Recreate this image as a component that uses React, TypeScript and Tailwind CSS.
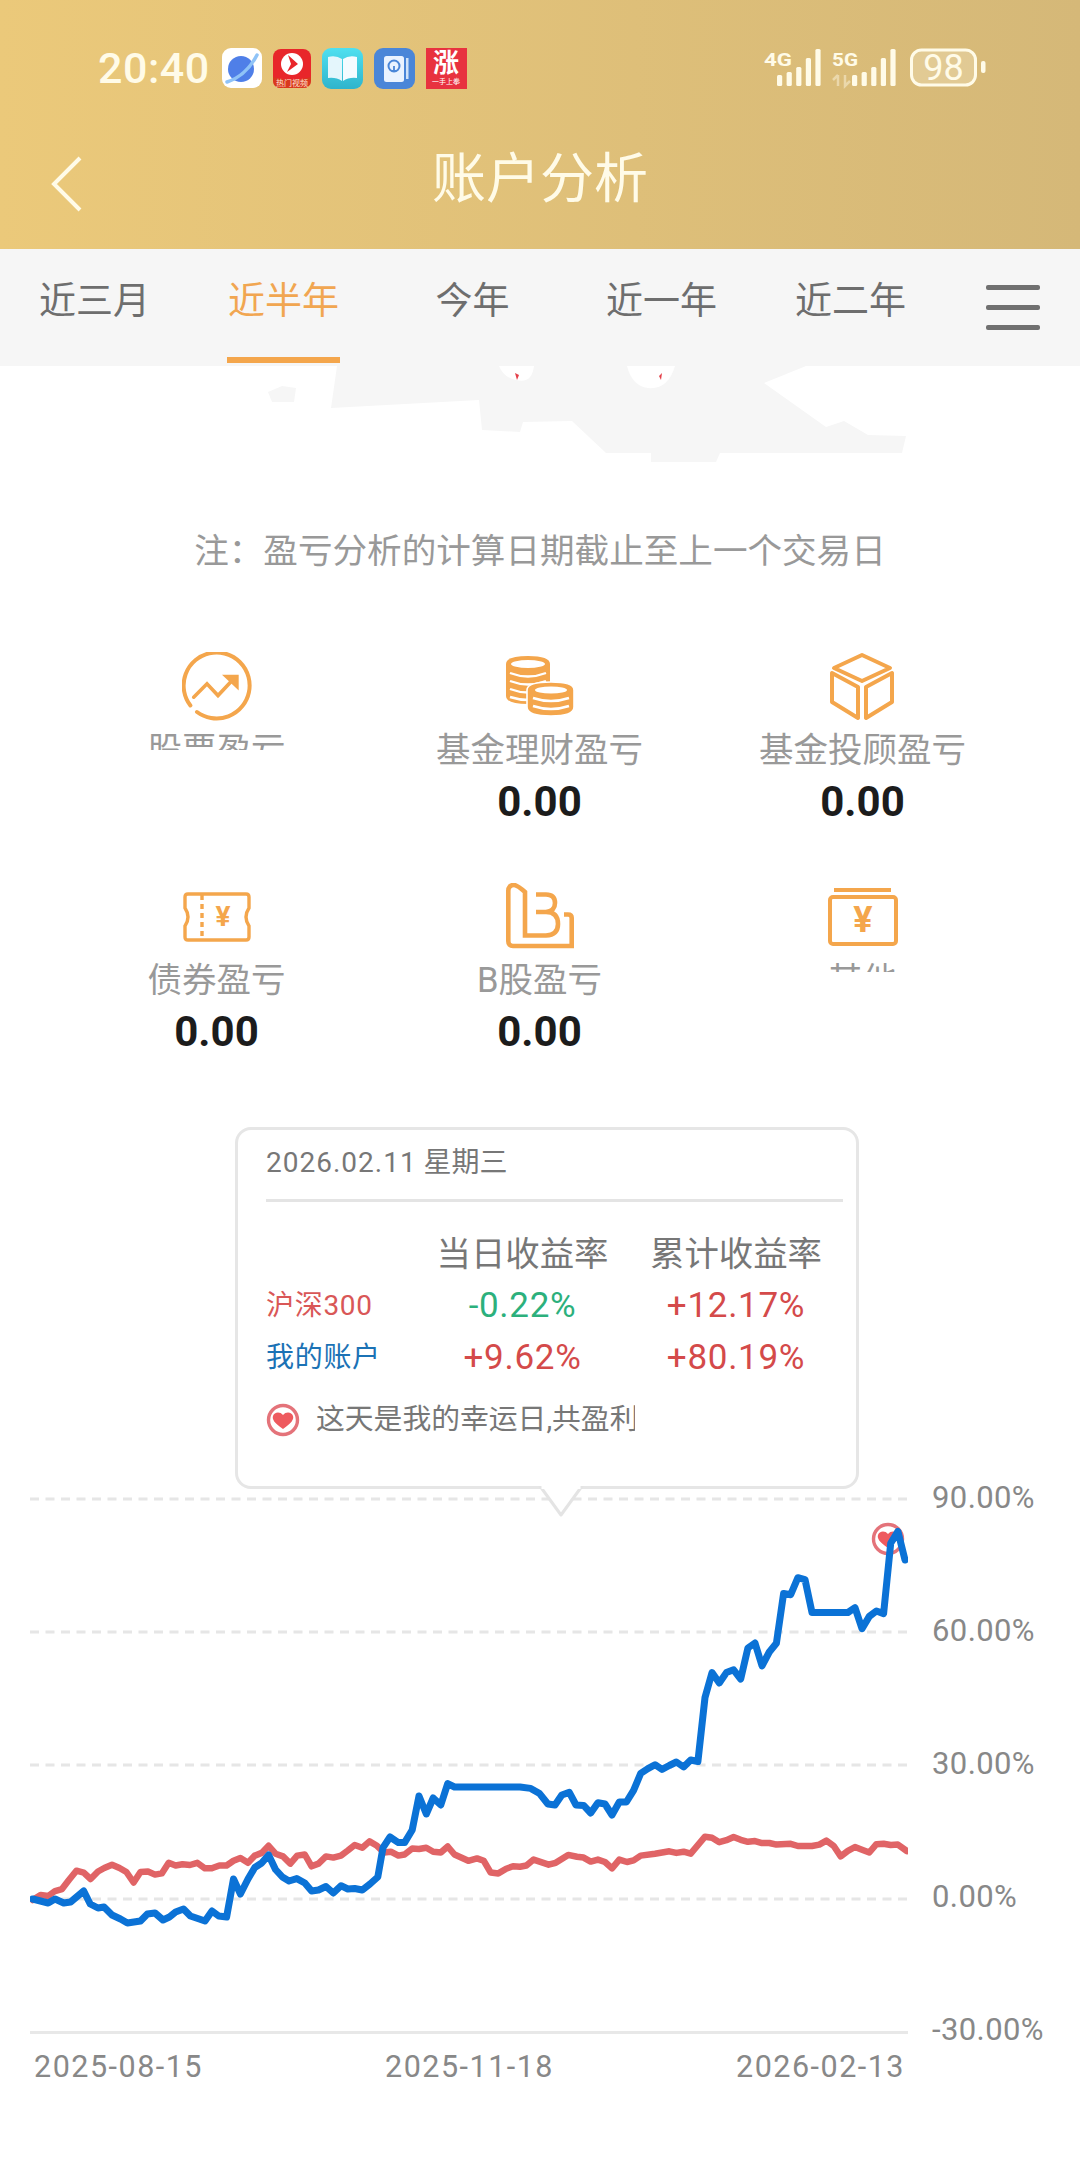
import React from "react";

const ORANGE = "#f4a64c";

const TABS = ["近三月", "近半年", "今年", "近一年", "近二年"];

// chart series, in page px so the grid lines can share the same coordinates
const ACCOUNT_LINE =
  "32.7,1899 48.2,1903 55,1899 63.7,1903 70.6,1902 83.7,1891 90.2,1904 98,1908 104,1907 112,1915 120.5,1919 127.4,1923 140.5,1921 147.4,1914 155,1913 163,1920 169.4,1917 175.6,1912 183.5,1909 190.4,1916 205,1921 212,1911 218.7,1916 226.6,1917 233.5,1879 240.4,1894 248,1879 254.8,1867.5 261.7,1863 268.6,1855 275.5,1869.5 282.4,1877 289,1881 296.8,1878.6 304.8,1883 311.6,1891 318.5,1890 326,1886.5 333.3,1893 341,1885.7 347.8,1889 354.7,1888.5 362.3,1890 370,1884 377.8,1877 383,1847.7 390,1837 398.4,1842.6 404.6,1842.6 412.2,1830 419,1796 426.3,1814 433.2,1798 440.8,1805 447.7,1783.7 454.5,1787 520,1787 530.7,1788.4 539.6,1793.6 547.9,1804 555,1805 561.8,1795 569.3,1792.4 576,1805 583.6,1805.4 590.7,1813 597.9,1802.7 605,1804 612,1815 619.3,1802 626.4,1802 633.6,1790.4 640.7,1773.4 647.9,1768.6 655,1764.7 662,1769.4 669.3,1765.5 676.4,1762 683.6,1767 690.7,1760 697.9,1761.5 705,1697.5 712,1672.6 719.3,1683 726.4,1672.6 733.6,1669.8 740.7,1679 747.9,1648 755,1643 762,1665.8 769.3,1652 776.4,1643.3 783.6,1593.5 790.7,1594.7 797.9,1577.7 805,1579.6 812,1612.5 847.9,1612.5 855,1607.7 862,1628.7 869.3,1616.4 876.4,1611 883.6,1613.6 890.7,1543.3 897.9,1531.4 905,1560";

const INDEX_LINE =
  "32.7,1900 40.6,1895 48.2,1896 55,1891 62,1889 68.9,1880 76.4,1870.7 83.7,1872.6 90.6,1879 98,1871.5 104.3,1868 112,1864.7 119.5,1868 126.4,1872 133.6,1882.5 140.5,1872 148,1871.5 155,1874.6 161.8,1873.4 168.7,1862.8 175.6,1865.5 182.5,1864.3 190,1865 197.3,1862.8 204.9,1868.3 211.8,1868.3 219.4,1865.5 226.6,1865.5 233.5,1860.8 240.4,1858 248,1862.8 254.8,1855.6 261.7,1852.9 268.6,1845.8 275.5,1853.7 283,1856.4 290.3,1863.6 297.2,1855.6 304.8,1854.5 311.6,1866.3 318.5,1863.6 326,1856.4 333.3,1857.6 341,1855.6 347.8,1850.5 354.7,1845 362.3,1847.7 369.5,1841.4 377,1845.8 384,1852.5 390.8,1851.7 398.4,1855.6 404.6,1854.5 412.2,1848.5 419,1849 426.3,1847.7 433.2,1851.7 440.8,1852.5 447.7,1846.5 454.5,1854.5 468.3,1860.8 477,1858.4 483.8,1860.8 490.7,1872.6 498.3,1873.4 506.2,1868.7 513,1866.3 520,1866.7 526.4,1865.5 533.6,1859.6 548.6,1864.7 555.7,1862.8 568.2,1854.9 577,1856.8 583.6,1857.6 590.7,1861.6 597.9,1859.6 605,1862 612,1868.3 619.3,1859.6 627,1862 633.6,1860.4 640.7,1855.6 655,1853.7 669.3,1851.3 676.4,1852.9 683.6,1851.7 690.7,1853.7 705,1836.7 712,1837.8 719.3,1842.2 726.4,1840.2 733.6,1837 740.7,1839.8 747.9,1841.8 755,1841 762,1843 769.3,1843 776.4,1844.6 790.7,1843.8 797.9,1846 812,1846 819.3,1844.6 826.4,1840.6 833.6,1845.8 840.7,1856.4 847.9,1850.9 855,1847 862,1849.7 869.3,1852.5 876.4,1844.2 883.6,1843.8 890.7,1845 897.9,1844.6 906.8,1851";

const GRID_Y = [1499, 1632, 1765, 1899];

function StatusApps() {
  return (
    <div className="ml-[12px] flex items-center gap-[11px]">
      <svg width="40" height="40" viewBox="0 0 40 40">
        <rect width="40" height="40" rx="9" fill="#fff" />
        <circle cx="19" cy="21" r="13" fill="#4f7fe8" />
        <path d="M5 34 Q24 28 35 7" stroke="#8fc3f7" strokeWidth="3.5" fill="none" strokeLinecap="round" />
      </svg>
      <svg width="38" height="39" viewBox="0 0 38 39">
        <rect width="38" height="39" rx="8" fill="#e8262a" />
        <path d="M0 28 Q19 34 38 28 V31 Q38 39 30 39 H8 Q0 39 0 31Z" fill="#d9381e" />
        <circle cx="19" cy="15" r="11" fill="#fff" />
        <path d="M15 6 L25 15 L14 23 L18 15Z" fill="#e8262a" />
        <text x="19" y="36.5" textAnchor="middle" fontSize="8" fill="#ffe3d0">热门视频</text>
      </svg>
      <svg width="41" height="41" viewBox="0 0 41 41">
        <defs>
          <linearGradient id="bookBg" x1="0" y1="0" x2="0" y2="1">
            <stop offset="0" stopColor="#4fe0f0" />
            <stop offset="1" stopColor="#2fb4cc" />
          </linearGradient>
        </defs>
        <rect width="41" height="41" rx="9" fill="url(#bookBg)" />
        <path d="M6 9 Q14 7 20 11 V33 Q14 29 6 30Z" fill="#e4f6fc" />
        <path d="M35 9 Q27 7 21 11 V33 Q27 29 35 30Z" fill="#f4fbff" />
      </svg>
      <svg width="41" height="41" viewBox="0 0 41 41">
        <rect width="41" height="41" rx="9" fill="#4a86d8" />
        <rect x="10" y="8" width="20" height="26" rx="2.5" fill="#eaf3ff" />
        <rect x="32" y="10" width="2.5" height="21" fill="#cfe2f8" />
        <circle cx="20" cy="18" r="5.5" fill="none" stroke="#4a86d8" strokeWidth="2" />
        <path d="M18 23 H22 M20 18 V23" stroke="#4a86d8" strokeWidth="1.8" />
      </svg>
      <div className="flex h-[41px] w-[41px] flex-col items-center bg-[#e8323f] text-white">
        <span className="text-[26px] leading-[30px] font-bold">涨</span>
        <span className="text-[7px] leading-[9px]">一手上拳</span>
      </div>
    </div>
  );
}

function SignalBars({ x }: { x: number }) {
  const tops = [75, 72, 67, 58, 49];
  return (
    <>
      {tops.map((top, i) => (
        <rect key={i} x={x + i * 9.6} y={top - 44} width="5.2" height={86 - top} rx="1.5" fill="#fffbe8" />
      ))}
    </>
  );
}

function StatusRight() {
  return (
    <svg className="ml-auto" width="232" height="48" viewBox="760 0 232 48">
      <text x="764" y="22" fontSize="18" fontWeight="700" fill="#fffbe8" textLength="28" lengthAdjust="spacingAndGlyphs">4G</text>
      <text x="832" y="22" fontSize="18" fontWeight="700" fill="#fffbe8" textLength="26" lengthAdjust="spacingAndGlyphs">5G</text>
      <SignalBars x={777} />
      <SignalBars x={852} />
      <path d="M838 31 V42 M833 36 L838 31 M845 31 V42 L850 37" stroke="#fffbe8" strokeOpacity="0.45" strokeWidth="2.5" fill="none" />
      <rect x="911.5" y="6" width="64" height="35" rx="10" fill="#fffbe8" fillOpacity="0.25" stroke="#fffbe8" strokeWidth="3" />
      <text x="943.5" y="36" textAnchor="middle" fontSize="36" fill="#fffbe8">98</text>
      <rect x="981" y="17" width="4.5" height="12" rx="2" fill="#fffbe8" />
    </svg>
  );
}

function StockIcon() {
  return (
    <svg width="70" height="70" viewBox="0 0 70 70" fill="none" stroke={ORANGE} strokeWidth="4">
      <path d="M15 60 A33 33 0 1 0 8.4 53.5" strokeLinecap="round" />
      <path d="M11.7 45.2 L25 31.8 L36 43.5 L51.7 26.8" strokeWidth="3.6" strokeLinecap="round" />
      <path d="M40 22.8 H56.7 V38.5Z" fill={ORANGE} stroke="none" />
    </svg>
  );
}

function CoinsIcon() {
  return (
    <svg width="70" height="62" viewBox="0 0 70 62" fill="none">
      <path d="M1 8 Q1 0 23 0 Q45 0 45 8 V40 Q45 48 23 48 Q1 48 1 40Z" fill={ORANGE} />
      <ellipse cx="23" cy="8" rx="17" ry="4" fill="#fff" />
      <path d="M5 17 Q23 24 41 17 M5 25 Q23 32 41 25 M5 33 Q23 40 41 33 M5 41 Q14 44 24 44" stroke="#fff" strokeWidth="2.4" />
      <path d="M22 34 Q22 26 46 26 Q69 26 69 34 V51 Q69 60 46 60 Q22 60 22 51Z" fill={ORANGE} stroke="#fff" strokeWidth="1.6" />
      <ellipse cx="46" cy="34" rx="16" ry="3.6" fill="#fff" />
      <path d="M28 42 Q46 48 64 42 M28 50 Q46 56 64 50" stroke="#fff" strokeWidth="2.4" />
    </svg>
  );
}

function CubeIcon() {
  return (
    <svg width="65" height="70" viewBox="0 0 65 70" fill="none" stroke={ORANGE} strokeWidth="4">
      <path d="M32 3 L60 16 L32 29 L4 16Z" strokeLinejoin="round" />
      <path d="M2 21 V50 L28 66 V35Z M62 21 V50 L36 66 V35Z" strokeLinejoin="round" />
    </svg>
  );
}

function TicketIcon() {
  return (
    <svg width="68" height="50" viewBox="0 0 68 50" fill="none" stroke={ORANGE} strokeWidth="3.4">
      <path d="M5 2 H63 Q66 2 66 5 V16 Q60 25 66 34 V45 Q66 48 63 48 H5 Q2 48 2 45 V34 Q8 25 2 16 V5 Q2 2 5 2Z" />
      <path d="M19 3 V47" strokeDasharray="5 4" />
      <text x="40" y="34" textAnchor="middle" fontSize="28" fontWeight="700" fill={ORANGE} stroke="none">¥</text>
    </svg>
  );
}

function BShareIcon() {
  return (
    <svg width="70" height="67" viewBox="0 0 70 67" fill="none" stroke={ORANGE} strokeWidth="4.6">
      <path d="M3.3 58 V8 Q3.3 2 9 2 Q12 2 20 9 V52.5 H41 Q53 52 53 41 Q53 29 41 29 H31 M41 29 Q50 28 50 20 Q50 11.5 41 11.5 H31" />
      <path d="M59 31.5 H63 Q66.7 31.5 66.7 35 V63 H8 Q3.3 63 3.3 58" />
    </svg>
  );
}

function WalletIcon() {
  return (
    <svg width="70" height="58" viewBox="0 0 70 58" fill="none" stroke={ORANGE} strokeWidth="4">
      <path d="M6 2 H63" />
      <rect x="2" y="9" width="66" height="47" rx="3" />
      <text x="35" y="44" textAnchor="middle" fontSize="36" fontWeight="700" fill={ORANGE} stroke="none">¥</text>
    </svg>
  );
}

const PNL_ITEMS = [
  { icon: <StockIcon />, label: "股票盈亏", cut: "h-[27px]" },
  { icon: <CoinsIcon />, label: "基金理财盈亏", value: "0.00" },
  { icon: <CubeIcon />, label: "基金投顾盈亏", value: "0.00" },
  { icon: <TicketIcon />, label: "债券盈亏", value: "0.00" },
  { icon: <BShareIcon />, label: "B股盈亏", value: "0.00" },
  { icon: <WalletIcon />, label: "其他", cut: "h-[19px]" },
];

function PnlCell({ icon, label, value, cut }: { icon: React.ReactNode; label: string; value?: string; cut?: string }) {
  return (
    <div className="flex h-[180px] flex-col items-center">
      <div className="flex h-[73px] items-center justify-center">{icon}</div>
      <div className={`overflow-hidden pt-[3px] ${cut ?? "h-[51px]"}`}>
        <div className="text-[34.5px] leading-[48px] whitespace-nowrap text-[#999]">{label}</div>
      </div>
      {value && <div className="text-[42px] leading-[56px] font-bold text-[#1c1c1c]">{value}</div>}
    </div>
  );
}

function HeartMark({ x = 0, y = 0 }: { x?: number; y?: number }) {
  return (
    <g transform={`translate(${x} ${y})`}>
      <circle cx="17" cy="17" r="14.5" fill="#fff" stroke="#e4737a" strokeWidth="3.4" />
      <path d="M17 26 C8 20 6 16 7 13 C8 9 14 8 17 12 C20 8 26 9 27 13 C28 16 26 20 17 26Z" fill="#ee5a5f" />
    </g>
  );
}

function Tooltip() {
  return (
    <div className="absolute top-[67px] left-[235px] z-10 h-[362px] w-[624px] rounded-[16px] border-[3px] border-[#e6e6e6] bg-white pt-[13px] pl-[28px]">
      <div className="text-[28px] leading-[40px] text-[#777]">
        <span className="tracking-[1px]">2026.02.11</span> 星期三
      </div>
      <div className="mt-[16px] h-[3px] w-[577px] bg-[#e4e4e4]" />
      <div className="mt-[26px] grid grid-cols-[150px_213px_214px] text-center text-[35px] leading-[52px] tracking-[0.7px]">
        <div />
        <div className="text-[34.4px] tracking-normal text-[#777]">当日收益率</div>
        <div className="text-[34.4px] tracking-normal text-[#777]">累计收益率</div>
        <div className="text-left text-[28px] text-[#d95757]">沪深300</div>
        <div className="text-[#2cb07c]">-0.22%</div>
        <div className="text-[#d44a4a]">+12.17%</div>
        <div className="text-left text-[28px] text-[#1b72b5]">我的账户</div>
        <div className="text-[#d44a4a]">+9.62%</div>
        <div className="text-[#d44a4a]">+80.19%</div>
      </div>
      <div className="mt-[12px] flex h-[48px] items-center">
        <svg width="34" height="34" viewBox="0 0 34 34">
          <HeartMark />
        </svg>
        <div className="ml-[16px] w-[319px] overflow-hidden text-[28.8px] whitespace-nowrap text-[#777]">这天是我的幸运日,共盈利</div>
      </div>
      <svg className="absolute top-[356px] left-[300px]" width="46" height="31" viewBox="0 0 46 31">
        <path d="M2 0 L23 29 L44 0" fill="#fff" stroke="#e4e4e4" strokeWidth="3" strokeLinejoin="round" />
        <rect x="3.5" y="0" width="39" height="3" fill="#fff" />
      </svg>
    </div>
  );
}

function Chart() {
  return (
    <div className="flex pl-[30px]">
      <div className="w-[878px]">
        <svg className="block" width="878" height="572" viewBox="30 1478 878 572" fill="none">
          {GRID_Y.map((y) => (
            <path key={y} d={`M30 ${y} H908`} stroke="#e6e6e6" strokeWidth="3" strokeDasharray="9 6.5" />
          ))}
          <path d="M30 2032.5 H908" stroke="#e8e8e8" strokeWidth="3" />
          <polyline points={INDEX_LINE} stroke="#e06466" strokeWidth="6.5" strokeLinejoin="round" strokeLinecap="round" />
          <HeartMark x={871} y={1522} />
          <polyline points={ACCOUNT_LINE} stroke="#0b72d6" strokeWidth="7" strokeLinejoin="round" strokeLinecap="round" />
        </svg>
        <div className="mt-[-3px] flex justify-between pr-[3px] pl-[4px] text-[30.5px] leading-[40px] tracking-[1.5px] text-[#888]">
          <span>2025-08-15</span>
          <span>2025-11-18</span>
          <span>2026-02-13</span>
        </div>
      </div>
      <div className="ml-[24px] flex h-[572px] flex-col justify-between text-[31px] leading-[40px] tracking-[0.4px] whitespace-nowrap text-[#888]">
        <span>90.00%</span>
        <span>60.00%</span>
        <span>30.00%</span>
        <span>0.00%</span>
        <span>-30.00%</span>
      </div>
    </div>
  );
}

export default function App() {
  return (
    <div className="min-h-[2177px] w-[1080px] overflow-hidden bg-white font-['Roboto','Noto_Sans_CJK_SC',sans-serif]">
      <header className="h-[249px] bg-gradient-to-r from-[#ebc97a] to-[#d5b878] pt-[44px]">
        <div className="flex h-[48px] items-center pr-[88px] pl-[98px]">
          <span className="text-[43px] leading-[48px] font-medium tracking-[0.5px] text-[#fffbe8]">20:40</span>
          <StatusApps />
          <StatusRight />
        </div>
        <div className="relative mt-[48px] flex h-[80px] items-center justify-center">
          <svg className="absolute left-[50px] mt-[8px]" width="34" height="56" viewBox="0 0 34 56" fill="none">
            <path d="M30 2 L4 28 L30 54" stroke="#fffbe8" strokeWidth="4" />
          </svg>
          <h1 className="text-[54px] leading-[80px] font-normal text-[#fffbe8]">账户分析</h1>
        </div>
      </header>

      <nav className="flex h-[117px] items-start bg-[#f6f6f6]">
        {TABS.map((tab, i) => (
          <div key={tab} className="flex h-[114px] w-[189px] flex-col items-center">
            <span className={`pt-[29px] text-[37px] leading-[48px] ${i === 1 ? "text-[#f1a651]" : "text-[#6e6e6e]"}`}>{tab}</span>
            {i === 1 && <span className="mt-[31px] h-[6px] w-[113px] bg-[#f4a64c]" />}
          </div>
        ))}
        <div className="mt-[36px] ml-[41px] flex w-[54px] flex-col gap-[15px]">
          <span className="h-[5px] rounded-[2px] bg-[#707070]" />
          <span className="h-[5px] rounded-[2px] bg-[#707070]" />
          <span className="h-[5px] rounded-[2px] bg-[#707070]" />
        </div>
      </nav>

      {/* painted-over banner strip under the tabs */}
      <svg className="block" width="1080" height="96" viewBox="0 366 1080 96">
        <path
          d="M337 366 L331 408 L479 400 L482 430 L520 432 L523 422 L572 421 L606 453 L651 453 L651 462 L716 462 L720 453 L902 453 L906 436 L868 435 L844 421 L826 427 L764 383 L806 366Z"
          fill="#f6f6f6"
        />
        <path d="M268 392 L282 386 L296 388 L294 402 L272 402Z" fill="#f6f6f6" />
        <path d="M499 366 H534 Q532 384 516 380 Q504 378 499 366Z" fill="#fff" />
        <path d="M627 366 H675 Q668 390 648 388 Q632 386 627 366Z" fill="#fff" />
        <path d="M515 373 L519 375 L517 380Z M662 373 L659 376 L661 380Z" fill="#e4404a" />
      </svg>

      <p className="mt-[64px] text-center text-[34.6px] leading-[50px] text-[#999]">注：盈亏分析的计算日期截止至上一个交易日</p>

      <section className="mt-[74px] grid grid-cols-[323px_323px_323px] gap-y-[50px] pl-[55px]">
        {PNL_ITEMS.map((item) => (
          <PnlCell key={item.label} {...item} />
        ))}
      </section>

      <section className="relative pt-[418px]">
        <Tooltip />
        <Chart />
      </section>
    </div>
  );
}
